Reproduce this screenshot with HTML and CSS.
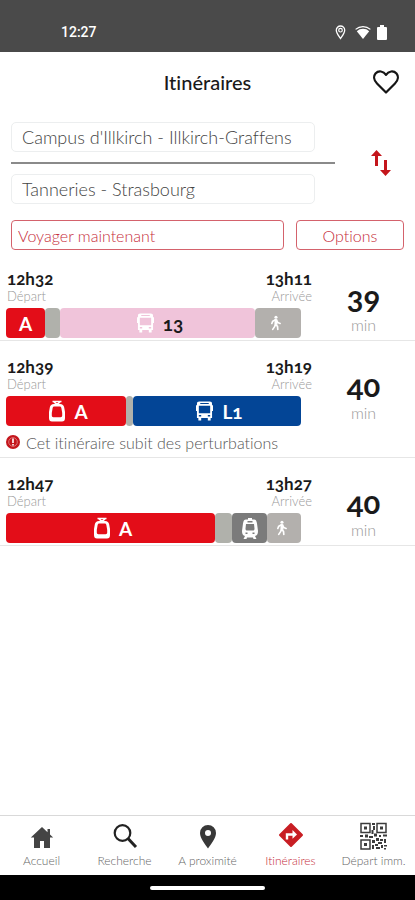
FILE: index.html
```html
<!DOCTYPE html>
<html lang="fr">
<head>
<meta charset="utf-8">
<meta name="viewport" content="width=device-width, initial-scale=1">
<title>Itinéraires</title>
<link rel="stylesheet" href="styles.css">
</head>
<body>
<svg class="sprite" aria-hidden="true">
  <symbol id="tram" viewBox="0 0 16 22">
    <path fill="none" stroke="currentColor" stroke-width="1.600" d="M3.500 1.500h9M5 1.800 8 4.500l3-2.700"/>
    <path fill="currentColor" fill-rule="evenodd" d="M5 4h6c2.500 0 3.800 1.200 4.200 3.500L16 12v6c0 2.500-1 3.500-3 3.500H3c-2 0-3-1-3-3.500v-6l.8-4.500C1.200 5.200 2.500 4 5 4zm.4 2.600c-1.100 0-1.600.6-1.800 1.600L2.800 13v2.500c0 1.200.6 1.700 1.600 1.700h7.200c1 0 1.600-.5 1.600-1.700V13l-.8-4.800c-.2-1-.7-1.600-1.800-1.600z"/>
  </symbol>
  <symbol id="bus" viewBox="0 0 18 20">
    <path fill="currentColor" fill-rule="evenodd" d="M3.500 0h11C16.200 0 17 .8 17 2.500V4h1v6h-1v7.500h-1.500V20h-3v-2.500h-7V20h-3v-2.500H1V10H0V4h1V2.500C1 .8 1.800 0 3.500 0zM4.500 1.400v1.200h9V1.400zM3 4.400v8.100h12V4.400zM3 14.200v1.600h2.500v-1.600zm9.500 0v1.600H15v-1.600z"/>
  </symbol>
  <symbol id="walk" viewBox="0 0 12 16">
    <circle cx="6.500" cy="1.700" r="1.700" fill="currentColor"/>
    <path fill="none" stroke="currentColor" stroke-width="1.800" stroke-linejoin="round" stroke-linecap="round" d="M6.500 4.500 6 9.500l2.200 2.200.3 3.300M6 9.500 5 12l-2 3M6 4.500 3 6 2 8.500M7 5l1.500 2.500L11 8.500"/>
    <path fill="currentColor" d="M5 4h3l.2 6H5z"/>
  </symbol>
  <symbol id="train" viewBox="0 0 16 21">
    <path fill="currentColor" fill-rule="evenodd" d="M6 0h4v1.500h2c2 0 2.500 1.500 3 4l1 7.500c0 3-1 4.500-3 5l1.500 3H11.500L11 19.500H5L4.500 21h-3L3 18c-2-.5-3-2-3-5l1-7.500c.5-2.500 1-4 3-4h2zM5.500 3v1.500h5V3zM4 6l-.5 4.500C3.500 12 4 12.500 5 12.500h6c1 0 1.500-.5 1.500-2L12 6zM3.500 14.500v1.500h2v-1.500zm7 0v1.500h2v-1.500z"/>
  </symbol>
</svg>

<div class="statusbar">
  <span>12:27</span>
  <div class="status-icons">
    <svg width="11" height="15" viewBox="0 0 10 15"><path fill="none" stroke="#fff" stroke-width="1.300" d="M5 13.500C3 10.500.8 8 .8 5.200a4.200 4.200 0 0 1 8.400 0C9.200 8 7 10.500 5 13.500z"/><circle cx="5" cy="5.200" r="1.800" fill="none" stroke="#fff" stroke-width="1.200"/></svg>
    <svg width="16" height="14" viewBox="0 0 16 14"><path fill="#fff" d="M8 14 1.800 6.200a9 9 0 0 1 12.400 0z"/><path fill="none" stroke="#fff" stroke-width="1.200" d="M.6 4.400a11 11 0 0 1 14.800 0"/></svg>
    <svg width="10" height="15" viewBox="0 0 10 15"><path fill="#fff" d="M3 0h4v2h2a1 1 0 0 1 1 1v11a1 1 0 0 1-1 1H1a1 1 0 0 1-1-1V3a1 1 0 0 1 1-1h2z"/></svg>
  </div>
</div>

<header class="header">
  <h1>Itinéraires</h1>
  <button class="icon-button" type="button" aria-label="Favori">
    <svg width="26" height="24" viewBox="0 0 26 24"><path fill="none" stroke="#151515" stroke-width="2.200" stroke-linejoin="round" d="M13 22.500 4 13.500C.5 10 .5 6 2.500 3.500c3-3.300 8-2.500 10.500 1.300 2.500-3.800 7.500-4.600 10.500-1.300 2 2.500 2 6.500-1.500 10z"/></svg>
  </button>
</header>

<main class="main">
  <form class="search">
    <div class="places">
      <input class="place" type="text" aria-label="Départ" value="Campus d'Illkirch - Illkirch-Graffens">
      <hr>
      <input class="place" type="text" aria-label="Arrivée" value="Tanneries - Strasbourg">
    </div>
    <button class="swap" type="button" aria-label="Inverser">
      <svg width="20" height="26" viewBox="0 0 20 26"><path fill="none" stroke="#c4161c" stroke-width="3" d="M5.500 16V3M14.500 10v13"/><path fill="#c4161c" d="M5.500 0 11 6H0zM14.500 26 9 20h11z"/></svg>
    </button>
    <div class="actions">
      <button class="outline when" type="button">Voyager maintenant</button>
      <button class="outline options" type="button">Options</button>
    </div>
  </form>

  <section class="trip">
    <div class="detail">
      <div class="times">
        <div><strong>12h32</strong><small>Départ</small></div>
        <div class="arrival"><strong>13h11</strong><small>Arrivée</small></div>
      </div>
      <div class="legs">
        <span class="leg red" style="flex-grow:39">A</span>
        <span class="leg grey" style="flex-grow:15"></span>
        <span class="leg pink" style="flex-grow:195"><svg width="17" height="20"><use href="#bus"/></svg>13</span>
        <span class="leg stone" style="flex-grow:46"><svg width="11" height="16"><use href="#walk"/></svg></span>
      </div>
    </div>
    <div class="duration"><b>39</b><span>min</span></div>
  </section>

  <section class="trip">
    <div class="detail">
      <div class="times">
        <div><strong>12h39</strong><small>Départ</small></div>
        <div class="arrival"><strong>13h19</strong><small>Arrivée</small></div>
      </div>
      <div class="legs">
        <span class="leg red" style="flex-grow:120"><svg width="16" height="22"><use href="#tram"/></svg>A</span>
        <span class="leg grey" style="flex-grow:7"></span>
        <span class="leg blue" style="flex-grow:168"><svg width="17" height="20"><use href="#bus"/></svg>L1</span>
      </div>
      <p class="alert"><svg width="14" height="14" viewBox="0 0 14 14"><circle cx="7" cy="7" r="7" fill="#c4161c"/><circle cx="7" cy="7" r="4.300" fill="none" stroke="#e58a8c" stroke-width=".8"/><path stroke="#fff" stroke-width="1.600" d="M7 3.500v4.500M7 9v1.600"/></svg>Cet itinéraire subit des perturbations</p>
    </div>
    <div class="duration"><b>40</b><span>min</span></div>
  </section>

  <section class="trip">
    <div class="detail">
      <div class="times">
        <div><strong>12h47</strong><small>Départ</small></div>
        <div class="arrival"><strong>13h27</strong><small>Arrivée</small></div>
      </div>
      <div class="legs">
        <span class="leg red" style="flex-grow:209"><svg width="16" height="22"><use href="#tram"/></svg>A</span>
        <span class="leg grey" style="flex-grow:17"></span>
        <span class="leg dark" style="flex-grow:35"><svg width="16" height="21"><use href="#train"/></svg></span>
        <span class="leg stone" style="flex-grow:34"><svg width="11" height="16"><use href="#walk"/></svg></span>
      </div>
    </div>
    <div class="duration"><b>40</b><span>min</span></div>
  </section>
</main>

<nav class="tabs">
  <a href="#accueil"><svg width="24" height="28" viewBox="0 0 24 28"><path fill="#444" d="M12 5 .8 15.500H4V26h6v-7h4v7h6V15.500h3.200L20 12.500V7h-2.500v3.200z"/></svg>Accueil</a>
  <a href="#recherche"><svg width="26" height="28" viewBox="0 0 26 28"><circle cx="10.500" cy="11" r="7.800" fill="none" stroke="#222" stroke-width="2.200"/><path stroke="#222" stroke-width="3" d="m16 16.500 8 8.500"/></svg>Recherche</a>
  <a href="#proximite"><svg width="18" height="28" viewBox="0 0 18 28"><path fill="#383838" fill-rule="evenodd" d="M9 3a8 8 0 0 1 8 8c0 5-5 11-8 15.500C6 22 1 16 1 11a8 8 0 0 1 8-8zm0 5a3 3 0 1 0 0 6 3 3 0 0 0 0-6z"/></svg>A proximité</a>
  <a class="active" href="#itineraires"><svg width="26" height="28" viewBox="0 0 26 28"><path fill="#c81e24" stroke="#c81e24" stroke-width="2" stroke-linejoin="round" d="m13 2 11 11-11 11L2 13z"/><path fill="none" stroke="#fff" stroke-width="2.400" d="M9 17.500v-5h6"/><path fill="#fff" d="m14.500 8 4.500 4.500-4.500 4.300z"/></svg>Itinéraires</a>
  <a href="#depart"><svg width="27" height="28" viewBox="0 0 27 28"><g fill="none" stroke="#3c3c3c" stroke-width="1.500"><path d="M1 1.500h9v9H1zM17 1.500h9v9h-9zM1 18h9v9H1z"/></g><path fill="#3c3c3c" d="M4 4.500h3v3H4zM20 4.500h3v3h-3zM4 21h3v3H4zM12 1h3v2h-3zM13 4h2v4h-2zM11.500 8h2v4h-2zM0 13h3v2H0zM5 12.500h3v3H5zM9 14h4v2H9zM14 11.500h3v3h-3zM19 13h2v2h-2zM23 12.500h4v2h-4zM12 18h3v3h-3zM16 16h3v3h-3zM20 17h3v2h-3zM24 17h2v4h-2zM18 20h4v2h-4zM12 23h2v4h-2zM15 22h3v2h-3zM16 25h4v2h-4zM21 23h2v3h-2zM24 23h3v1.500h-3zM24 26h2v1.500h-2z"/></svg>Départ imm.</a>
</nav>
<div class="homebar"><span></span></div>
</body>
</html>
```
FILE: styles.css
```css
* { box-sizing: border-box; }

body {
  margin: 0;
  min-height: 100vh;
  display: flex;
  flex-direction: column;
  background: #fff;
  color: #1a1a1a;
  font-family: Lato, "Open Sans", sans-serif;
  font-variant-ligatures: none;
  font-variant-numeric: oldstyle-nums;
}

button, input { font: inherit; color: inherit; background: none; margin: 0; }
svg { flex: none; display: block; }
.sprite { position: absolute; width: 0; height: 0; }

.statusbar {
  height: 52px;
  padding: 12px 28px 0 61px;
  display: flex;
  align-items: center;
  justify-content: space-between;
  background: #4a4a4a;
  color: #fff;
  font: 500 14px/20px Roboto, sans-serif;
}
.status-icons { display: flex; align-items: center; gap: 9px; }
.status-icons svg:last-child { margin-left: -3px; }

.header {
  height: 60px;
  padding: 0 16px;
  display: grid;
  grid-template-columns: 26px 1fr 26px;
  align-items: center;
}
.header h1 {
  grid-column: 2;
  margin: 0;
  text-align: center;
  font-size: 20px;
  line-height: 24px;
  font-weight: 500;
}
.icon-button, .swap { padding: 0; border: 0; }

.main { flex: 1; }

.search {
  padding: 10px 11px 3px;
  display: grid;
  grid-template-columns: 1fr 69px;
  align-items: center;
}
.places { display: flex; flex-direction: column; }
.place {
  height: 30px;
  margin-right: 20px;
  padding: 0 10px;
  border: 1px solid #eceeef;
  border-radius: 5px;
  color: #444;
  font-size: 18px;
  font-weight: 300;
  min-width: 0;
}
.places hr { width: 100%; height: 2px; margin: 10px 0; border: 0; background: #8a8a8a; }
.swap { justify-self: center; margin-left: 22px; }
.actions {
  grid-column: 1 / -1;
  margin-top: 16px;
  display: flex;
  gap: 12px;
}
.outline {
  height: 30px;
  padding: 0 6px;
  border: 1px solid #d4626c;
  border-radius: 4px;
  color: #c62c3a;
  font-size: 16px;
  font-weight: 300;
}
.when { flex: 259; text-align: left; }
.options { flex: 94; text-align: center; }

.trip {
  padding: 16px 0 2px 6px;
  display: flex;
  border-bottom: 1px solid #e6e6e6;
}
.detail { flex: 306; }
.times { display: flex; justify-content: space-between; padding-left: 1px; }
.times strong, .times small { display: block; }
.times strong { font-size: 17px; line-height: 20px; font-weight: 700; }
.times small { color: #999; font-size: 13px; line-height: 14px; font-weight: 300; }
.arrival { text-align: right; }
.legs { display: flex; height: 30px; margin: 5px 11px 0 0; }
.leg {
  flex: 1 1 0;
  min-width: 0;
  display: flex;
  align-items: center;
  justify-content: center;
  gap: 9px;
  border-radius: 4px;
  color: #fff;
  font-size: 19px;
  font-weight: 700;
}
.red { background: #e30d18; }
.grey { background: #b0b1ab; }
.pink { background: #f0c4da; color: #1a1a1a; }
.pink svg { color: #fff; }
.stone { background: #b3b0ad; }
.dark { background: #7b7b7b; }
.blue { background: #034596; }
.red svg, .pink svg, .blue svg { margin-left: 5px; }
.stone svg { margin-right: 6px; }

.alert {
  height: 29px;
  margin: 0;
  padding-top: 3px;
  display: flex;
  align-items: center;
  gap: 6px;
  color: #555;
  font-size: 16px;
  font-weight: 300;
  white-space: nowrap;
}

.duration {
  flex: 103;
  padding-top: 12px;
  text-align: center;
}
.duration b, .duration span { display: block; }
.duration b { margin-bottom: 3px; font-size: 31px; line-height: 32px; font-weight: 700; }
.duration span { color: #999; font-size: 16px; line-height: 18px; font-weight: 300; }

.tabs {
  height: 60px;
  display: grid;
  grid-template-columns: repeat(5, 1fr);
  border-top: 1px solid #d9d9d9;
}
.tabs a {
  padding-top: 6px;
  display: flex;
  flex-direction: column;
  align-items: center;
  gap: 4px;
  color: #666;
  font-size: 12px;
  line-height: 14px;
  font-weight: 300;
  text-decoration: none;
  white-space: nowrap;
}
.tabs .active { color: #c62c3a; }

.homebar {
  height: 25px;
  display: flex;
  align-items: center;
  justify-content: center;
  background: #000;
}
.homebar span { width: 115px; height: 4px; border-radius: 2px; background: #fff; }
```
